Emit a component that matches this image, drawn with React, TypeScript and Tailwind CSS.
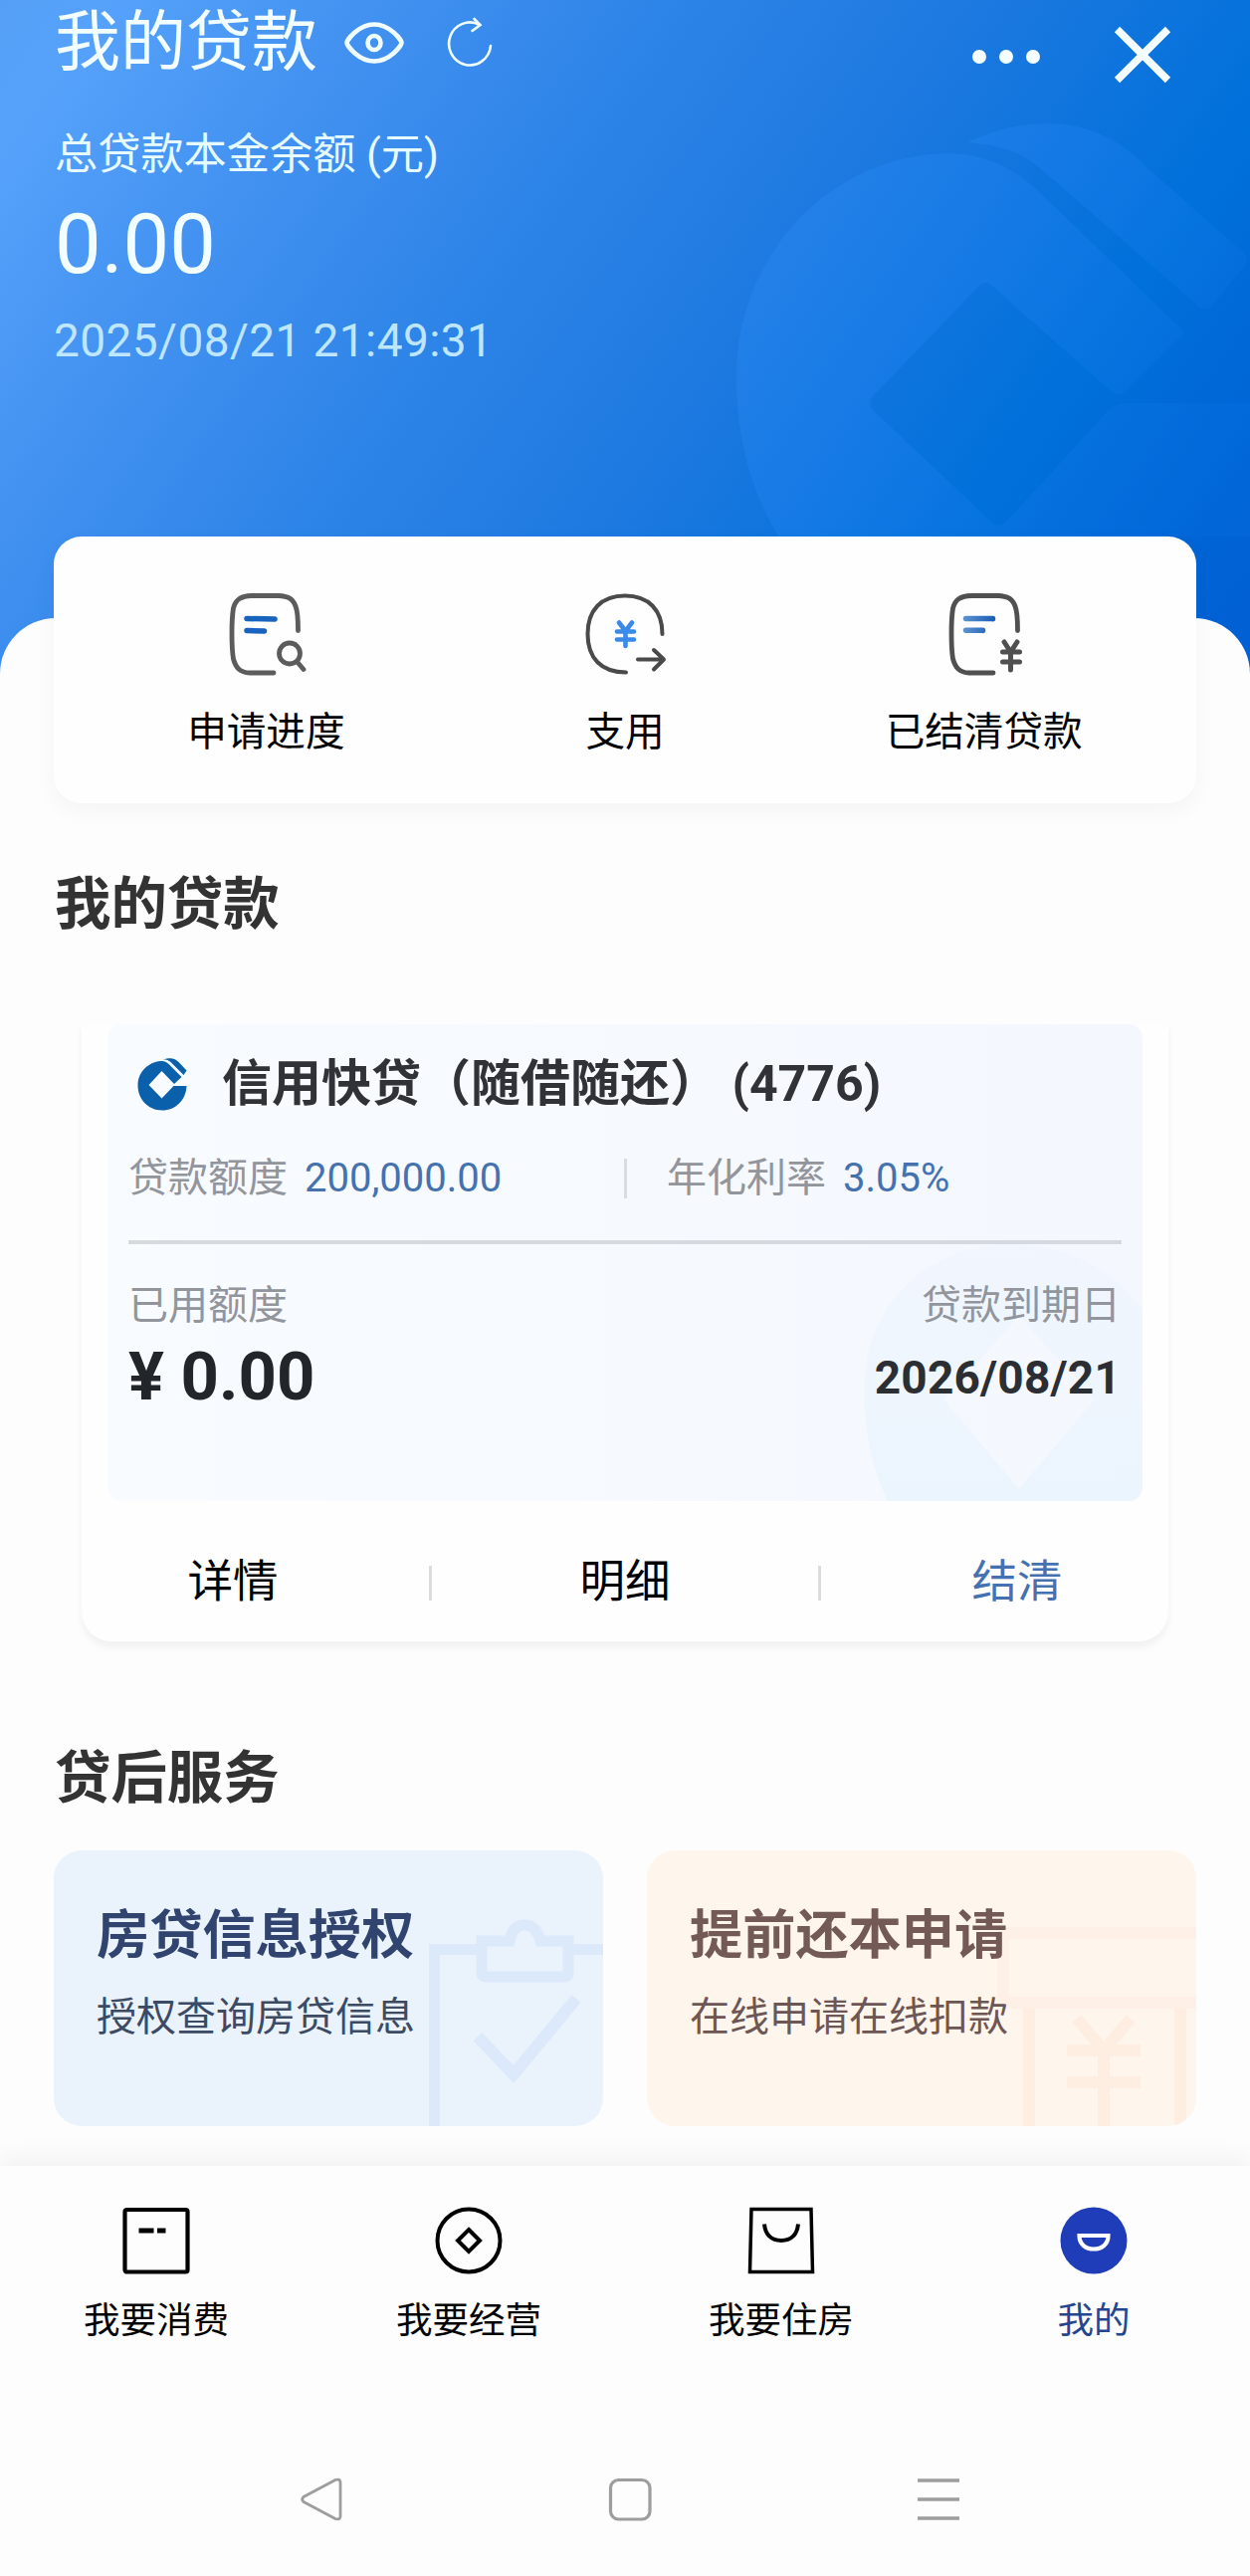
import React from "react";

interface QuickAction {
  label: string;
  icon: React.ReactNode;
}

interface Tab {
  label: string;
  icon: React.ReactNode;
  active?: boolean;
}

const EyeIcon = () => (
  <svg width="62" height="44" viewBox="0 0 62 44" fill="none" stroke="#f0feff" strokeWidth="4.6">
    <path d="M3.5 22C3.5 19.5 15 3.500 31 3.500S58.5 19.5 58.5 22 47 40.500 31 40.500 3.500 24.5 3.500 22Z" />
    <ellipse cx="31" cy="22" rx="6.500" ry="7" />
  </svg>
);

const RefreshIcon = () => (
  <svg width="48" height="52" viewBox="0 0 48 52" fill="none" stroke="#f0feff" strokeWidth="2.6" strokeLinecap="round">
    <path d="M45 29A21 21.500 0 1 1 34 8" />
    <path d="M28.500 2 34.500 8 26.500 14" />
  </svg>
);

const CloseIcon = () => (
  <svg width="60" height="60" viewBox="0 0 60 60" stroke="#f6ffff" strokeWidth="7.500">
    <path d="M4.500 4.500 55.500 55.500M55.500 4.500 4.500 55.500" />
  </svg>
);

const BankLogo = () => (
  <svg width="50" height="53" viewBox="0 0 50 53" fill="#0b60ac">
    <path d="M23.500 3C27 2.500 29.500 4 32 6.500L44.500 19 37 26 24.500 13 11.500 27 24.500 40.500 36.500 28H49.500C49 42 38.500 52.500 25 52.500 11 52.500 0.500 41.500 0.500 27.500 0.500 14 11 4 23.500 3Z" />
    <path d="M26 1.500C33-1 38 0 42 4.500L49.500 12.500 46.500 17 34 4.500C31.500 2 29 1.500 26 1.500Z" />
  </svg>
);

/* Oversized bank mark behind the balance */
const HeaderMark = () => (
  <svg className="absolute right-0 top-0" width="556" height="539" viewBox="700 0 556 539">
    <defs>
      <linearGradient id="mark" x1="740" y1="150" x2="1240" y2="480" gradientUnits="userSpaceOnUse">
        <stop offset="0" stopColor="#2f8cf5" stopOpacity="0.45" />
        <stop offset="0.500" stopColor="#1f82f2" stopOpacity="0.35" />
        <stop offset="1" stopColor="#0a76e6" stopOpacity="0.15" />
      </linearGradient>
    </defs>
    <g fill="url(#mark)">
      <path d="M948 154C990 153 1020 170 1044 193L1186 329Q1192 334 1186 339L1130 394Q1124 400 1117 394L997 287Q990 281 984 287L877 398Q871 405 877 412L996 524Q1004 532 1012 523L1112 414Q1120 405 1132 405H1256V540H783C755 495 740 440 740 378 740 255 835 158 948 154Z" />
      <path d="M972 143C1040 112 1105 118 1152 168L1250 254Q1256 261 1250 267L1217 308Q1211 314 1205 308L1052 175C1028 152 1005 146 972 143Z" />
    </g>
  </svg>
);

const ProgressIcon = () => (
  <svg width="82" height="84" viewBox="0 0 82 84" fill="none" stroke="#5c5c5c" strokeWidth="4.800" strokeLinecap="round">
    <path d="M73.500 38.500C73.500 29 73 19 71 14 68 6 63 4 54 3.500H27C16 4 11 7 8.500 16 6.500 28 6.500 55 8.500 67 11 76 15 80.500 25 81H49" />
    <path d="M22 26.500 50 27M22 38.500 39.500 39" stroke="#1763bd" strokeWidth="5.500" />
    <circle cx="65" cy="61.500" r="10.500" />
    <path d="M73.500 71 79 77.500" />
  </svg>
);

const WithdrawIcon = () => (
  <svg width="84" height="84" viewBox="0 0 84 84" fill="none" stroke="#4a4a4a" strokeWidth="4" strokeLinecap="round" strokeLinejoin="round">
    <path d="M79.500 42C79.500 18 66 3.500 42 3.500S4.500 18 4.500 42 18 80.500 43 80.500" />
    <path d="M55 67.500H80M71 58 81 67.500 71 77.500" />
    <path d="M36 30.500 42.500 39 49 30.500M34 39.500H51M34 47.500H51M42.500 39V54" stroke="#3b8ae8" strokeWidth="4.600" />
  </svg>
);

const SettledIcon = () => (
  <svg width="82" height="84" viewBox="0 0 82 84" fill="none" stroke="#505050" strokeWidth="4.800" strokeLinecap="round" strokeLinejoin="round">
    <defs>
      <linearGradient id="lines" x1="20" y1="0" x2="50" y2="0" gradientUnits="userSpaceOnUse">
        <stop offset="0" stopColor="#5d93cf" />
        <stop offset="1" stopColor="#1c5fb8" />
      </linearGradient>
    </defs>
    <path d="M74.500 38.500C74.500 29 74 19 72 14 69 6 64 4 55 3.500H28C17 4 12 7 9.500 16 7.500 28 7.500 55 9.500 67 12 76 16 80.500 26 81H50" />
    <path d="M22.500 26.500H49.500V26.700M22.500 38.300H39.500V38.500" stroke="url(#lines)" strokeWidth="5.500" />
    <path d="M61 50 67.500 60 74 50M59.500 60H76.500M59.500 70H76.500M67.500 60V78" strokeWidth="5" />
  </svg>
);

const quickActions: QuickAction[] = [
  { label: "申请进度", icon: <ProgressIcon /> },
  { label: "支用", icon: <WithdrawIcon /> },
  { label: "已结清贷款", icon: <SettledIcon /> },
];

const tabs: Tab[] = [
  {
    label: "我要消费",
    icon: (
      <svg width="68" height="68" viewBox="0 0 68 68" fill="none" stroke="#000">
        <rect x="2.500" y="3" width="63" height="62.500" rx="2" strokeWidth="4.200" />
        <path d="M16.500 24H31.500M35 24H43.500" strokeWidth="5" />
      </svg>
    ),
  },
  {
    label: "我要经营",
    icon: (
      <svg width="68" height="68" viewBox="0 0 68 68" fill="none" stroke="#000" strokeWidth="4">
        <circle cx="34" cy="34" r="31.500" />
        <path d="M34 23 45 34 34 45 23 34Z" />
      </svg>
    ),
  },
  {
    label: "我要住房",
    icon: (
      <svg width="68" height="68" viewBox="0 0 68 68" fill="none" stroke="#000" strokeWidth="3.500">
        <path d="M4 2.500H64L65.500 65.500H2.500Z" />
        <path d="M17 17.500C18 28 24 34 34 34S50 28 51 17.500" strokeWidth="4" />
      </svg>
    ),
  },
  {
    label: "我的",
    active: true,
    icon: (
      <svg width="68" height="68" viewBox="0 0 68 68">
        <circle cx="34" cy="34" r="33.500" fill="#1f3cb9" />
        <path d="M19.500 29H48.500C48.500 38 42 42.500 34 42.500S19.500 38 19.500 29Z" fill="none" stroke="#fff" strokeWidth="4.200" />
      </svg>
    ),
  },
];

const ClipboardArt = () => (
  <svg className="absolute right-0 bottom-0" width="180" height="220" viewBox="0 0 180 220" fill="none" stroke="#dce9fb" strokeWidth="11">
    <path d="M10.500 220V42.500H56M146 42.500H180" />
    <path d="M58 34H86C88 22 94 18 101 18S114 22 117 34H145V66Q145 70 141 70H62Q58 70 58 66Z" />
    <path d="M54 130 90 168 153 92" strokeWidth="12" />
  </svg>
);

const VoucherArt = () => (
  <svg className="absolute right-0 bottom-0" width="202" height="202" viewBox="0 0 202 202" fill="none" stroke="#feeee2" strokeWidth="12">
    <path d="M202 8H8V78H202" stroke="#fef0e7" />
    <path d="M34 84V202M186 84V202" />
    <path d="M82 94 109 126 136 94M72 126H146M72 158H146M109 126V202" />
  </svg>
);

const LoanCard = () => (
  <div className="mx-[82px] mt-[92px] h-[620px] rounded-b-[30px] bg-[#fefefe] shadow-[0_6px_6px_1px_rgba(0,0,0,0.045)]">
    <div className="relative mx-[26px] h-[479px] overflow-hidden rounded-[14px] bg-linear-to-r from-[#f8fbff] to-[#f4f7fd] px-[21px] pt-[29px]">
      <svg className="absolute right-0 bottom-0" width="284" height="262" viewBox="0 0 284 262">
        <defs>
          <linearGradient id="panelMark" x1="0" y1="0" x2="0" y2="262" gradientUnits="userSpaceOnUse">
            <stop offset="0" stopColor="#edf4fe" stopOpacity="0.4" />
            <stop offset="1" stopColor="#ebf5fe" />
          </linearGradient>
        </defs>
        <path
          d="M4 150C4 60 74 4 150 4 205 4 250 25 284 70V262H28C12 230 4 190 4 150ZM160 76 84 160 160 250 236 160Z"
          fill="url(#panelMark)"
          fillRule="evenodd"
        />
      </svg>
      <div className="relative">
        <div className="flex h-[62px] items-center pl-[9px]">
          <BankLogo />
          <h3 className="ml-[35px] whitespace-pre text-[50px] font-bold leading-[62px] text-[#303237]">
            信用快贷（随借随还） (4776)
          </h3>
        </div>
        <div className="mt-[44px] flex h-[40px] items-center text-[40px] leading-[40px] text-[#92959b]">
          <span className="w-[177px]">贷款额度</span>
          <span className="w-[321px] text-[#4572ae]">200,000.00</span>
          <span className="h-[40px] w-[3px] bg-[#d9dce1]" />
          <span className="ml-[40px] w-[177px]">年化利率</span>
          <span className="text-[#4572ae]">3.05%</span>
        </div>
        <div className="mt-[42px] h-[4px] bg-[#d6dae0]" />
        <div className="flex justify-between">
          <div className="pt-[42px]">
            <p className="text-[40px] leading-[40px] text-[#92959b]">已用额度</p>
            <p className="mt-[16px] text-[67px] font-bold leading-[70px] text-[#222529]">¥ 0.00</p>
          </div>
          <div className="pt-[42px] pr-[1px] text-right">
            <p className="text-[40px] leading-[40px] text-[#92959b]">贷款到期日</p>
            <p className="mt-[25px] text-[46px] font-bold leading-[54px] tracking-[0.2px] text-[#2b2e33]">2026/08/21</p>
          </div>
        </div>
      </div>
    </div>
    <div className="-mx-[45px] grid h-[164px] grid-cols-[394px_394px_394px] items-center text-center text-[45.5px] leading-[60px] text-black">
      <span>详情</span>
      <span className="flex items-center justify-between">
        <i className="h-[35px] w-[3px] bg-[#dcdcdc]" />
        <span>明细</span>
        <i className="h-[35px] w-[3px] bg-[#dcdcdc]" />
      </span>
      <span className="text-[#4471b1]">结清</span>
    </div>
  </div>
);

const App: React.FC = () => {
  return (
    <div className="h-[2588px] w-[1256px] overflow-hidden bg-[#fdfdfd] font-['Roboto','Noto_Sans_CJK_SC',sans-serif]">
      <header className="relative h-[700px] bg-[linear-gradient(125deg,#559ff6_0%,#56a2fb_6%,#4392f1_21%,#2f85e8_37%,#1d79e0_56%,#0070da_77%,#0060d4_96%)] pl-[55px] text-[#f2feff]">
        <HeaderMark />
        <div className="relative flex items-start justify-between">
          <div>
            <div className="flex h-[86px] items-center">
              <h1 className="w-[290px] text-[66px] leading-[86px]">我的贷款</h1>
              <EyeIcon />
              <span className="ml-[41px]">
                <RefreshIcon />
              </span>
            </div>
            <p className="mt-[44px] text-[43.2px] leading-[52px] text-[#e6fcff]">总贷款本金余额 (元)</p>
            <p className="mt-[19px] text-[83px] leading-[90px]">0.00</p>
            <p className="-ml-[1px] mt-[24px] text-[46px] leading-[54px] tracking-[0.4px] text-[#bfe6ff]">
              2025/08/21 21:49:31
            </p>
          </div>
          <div className="flex items-center pt-[25px] pr-[78px]">
            <div className="flex gap-[13px] pt-[4px]">
              <i className="h-[14px] w-[14px] rounded-full bg-[#f6ffff]" />
              <i className="h-[14px] w-[14px] rounded-full bg-[#f6ffff]" />
              <i className="h-[14px] w-[14px] rounded-full bg-[#f6ffff]" />
            </div>
            <span className="ml-[73px]">
              <CloseIcon />
            </span>
          </div>
        </div>
      </header>

      <main className="relative -mt-[79px] flow-root h-[1555px] rounded-t-[56px] bg-[#fdfdfd]">
        <div className="mx-[54px] -mt-[82px] grid h-[268px] grid-cols-3 rounded-[28px] bg-[#fefefe] px-[33px] shadow-[0_8px_24px_rgba(0,0,0,0.04)]">
          {quickActions.map((a) => (
            <div key={a.label} className="flex flex-col items-center pt-[56px]">
              {a.icon}
              <span className="mt-[33px] text-[39.6px] leading-[48px] text-black">{a.label}</span>
            </div>
          ))}
        </div>

        <h2 className="mt-[74px] pl-[55px] text-[56.4px] font-bold leading-[56px] text-[#333]">我的贷款</h2>
        <LoanCard />

        <h2 className="mt-[110px] pl-[55px] text-[56.4px] font-bold leading-[56px] text-[#333]">贷后服务</h2>
        <div className="mx-[54px] mt-[44px] grid h-[277px] grid-cols-2 gap-[44px]">
          <div className="relative overflow-hidden rounded-[28px] bg-[#eaf3fc] pt-[54px] pl-[43px]">
            <ClipboardArt />
            <h3 className="relative text-[53.2px] font-bold leading-[64px] text-[#31446f]">房贷信息授权</h3>
            <p className="relative mt-[26px] text-[40px] leading-[48px] text-[#3c4a63]">授权查询房贷信息</p>
          </div>
          <div className="relative overflow-hidden rounded-[28px] bg-[#fef5ed] pt-[54px] pl-[43px]">
            <VoucherArt />
            <h3 className="relative text-[53.2px] font-bold leading-[64px] text-[#735a57]">提前还本申请</h3>
            <p className="relative mt-[26px] text-[40px] leading-[48px] text-[#6d5654]">在线申请在线扣款</p>
          </div>
        </div>
      </main>

      <footer className="relative h-[412px] bg-[#fdfdfd] shadow-[0_-8px_24px_rgba(0,0,0,0.05)]">
        <nav className="grid grid-cols-4 pt-[41px]">
          {tabs.map((t) => (
            <div key={t.label} className="flex flex-col items-center">
              {t.icon}
              <span
                className={
                  t.active
                    ? "mt-[25px] text-[36.5px] leading-[44px] text-[#24468f]"
                    : "mt-[25px] text-[36.5px] leading-[44px] text-black"
                }
              >
                {t.label}
              </span>
            </div>
          ))}
        </nav>
        {/* Android system keys */}
        <div className="mt-[135px] flex items-center justify-between pr-[292px] pl-[302px]">
          <svg width="42" height="44" viewBox="0 0 42 44" fill="none" stroke="#9d9d9d" strokeWidth="2.800" strokeLinejoin="round">
            <path d="M3 19.500 35 2.500Q40 1 40 5V39Q40 43 35 41.500L3 24.500Q0.500 22 3 19.500Z" />
          </svg>
          <svg width="44" height="44" viewBox="0 0 44 44" fill="none" stroke="#9d9d9d" strokeWidth="3.200">
            <rect x="2.500" y="2.500" width="39.500" height="39.500" rx="8" />
          </svg>
          <svg width="42" height="44" viewBox="0 0 42 44" stroke="#9d9d9d" strokeWidth="3.500">
            <path d="M0 3H42M0 22H42M0 41H42" />
          </svg>
        </div>
      </footer>
    </div>
  );
};

export default App;
